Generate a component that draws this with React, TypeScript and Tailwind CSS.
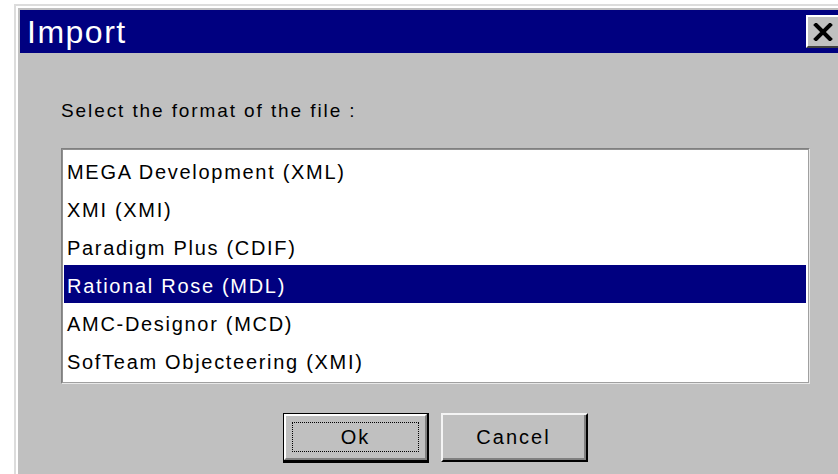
import React from "react";

const formats = [
  "MEGA Development (XML)",
  "XMI (XMI)",
  "Paradigm Plus (CDIF)",
  "Rational Rose (MDL)",
  "AMC-Designor (MCD)",
  "SofTeam Objecteering (XMI)",
];

const selected = 3;

function CloseButton() {
  return (
    <div className="ml-auto mr-[4px] flex h-[33px] w-[34px] items-center justify-center border-t-2 border-l-2 border-b-2 border-r-2 border-t-white border-l-white border-b-[#404040] border-r-[#404040] bg-[#c0c0c0]">
      <svg width="20" height="18" viewBox="0 0 20 18">
        <path d="M3 2 L17 16 M17 2 L3 16" stroke="#000" strokeWidth="4" strokeLinecap="square" />
      </svg>
    </div>
  );
}

export default function App() {
  return (
    <div
      className="h-[474px] w-[838px] overflow-hidden bg-white pl-[14px] pt-[4px]"
      style={{ fontFamily: '"Liberation Sans", Arial, sans-serif' }}
    >
      <div className="w-[836px] border-t-2 border-l-2 border-[#dcdcdc]">
        <div className="border-t-2 border-l-2 border-white">
          <div className="h-[470px] bg-[#c0c0c0] pl-[2px] pt-[2px]">
            {/* title bar */}
            <div className="flex h-[43px] w-[824px] items-center bg-[#000080]">
              <span className="pl-[7px] text-[32px] leading-none tracking-[1.5px] text-white">
                Import
              </span>
              <CloseButton />
            </div>

            {/* dialog body */}
            <div className="w-[824px] pl-[41px] pr-[34px] pt-[48px]">
              <div className="h-[20px] text-[19px] leading-[20px] tracking-[1.9px] text-black">
                Select the format of the file :
              </div>

              <div className="mt-[27px] border-t border-l border-b border-r border-t-[#808080] border-l-[#808080] border-b-[#e8e8e8] border-r-[#e8e8e8]">
                <div className="h-[234px] border-t border-l border-b border-r border-t-[#909090] border-l-[#909090] border-b-[#a0a0a0] border-r-[#a0a0a0] bg-white pl-[1px] pr-[2px] pt-[1px]">
                  {formats.map((f, i) => (
                    <div
                      key={f}
                      className={
                        i === selected
                          ? "flex h-[38px] items-center bg-[#000080] pl-[3px] pt-[3px] text-[20px] tracking-[1.7px] text-white"
                          : "flex h-[38px] items-center pl-[3px] pt-[3px] text-[20px] tracking-[1.7px] text-black"
                      }
                    >
                      {f}
                    </div>
                  ))}
                </div>
              </div>

              {/* buttons */}
              <div className="mt-[29px] flex justify-center gap-[12px]">
                <div className="h-[50px] w-[146px] border-t-[1px] border-l-[1px] border-r-2 border-b-[3px] border-black">
                  <div className="flex h-full w-full items-center justify-center border-t-2 border-l-2 border-b-2 border-r-2 border-t-white border-l-white border-b-[#808080] border-r-[#808080] bg-[#c0c0c0] p-[6px]">
                    <div className="flex h-full w-full items-center justify-center border border-dotted border-black text-[20px] tracking-[2px] text-black">
                      Ok
                    </div>
                  </div>
                </div>
                <div className="h-[49px] w-[147px] border-t-2 border-l-2 border-b-2 border-r-2 border-t-[#f4f4f4] border-l-[#f4f4f4] border-b-black border-r-black">
                  <div className="flex h-full w-full items-center justify-center border-b-2 border-r-2 border-b-[#808080] border-r-[#808080] bg-[#c0c0c0] text-[20px] tracking-[2px] text-black">
                    Cancel
                  </div>
                </div>
              </div>
            </div>
          </div>
        </div>
      </div>
    </div>
  );
}
